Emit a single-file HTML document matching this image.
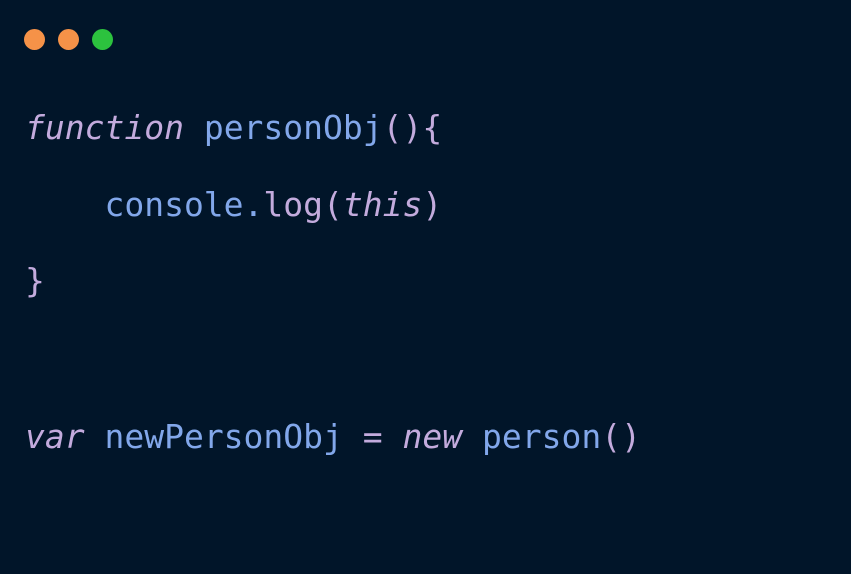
<!DOCTYPE html>
<html><head><style>
html,body{margin:0;padding:0;}
body{width:851px;height:574px;background:#011529;position:relative;overflow:hidden;font-family:"DejaVu Sans Mono","Liberation Mono",monospace;}
.d{position:absolute;top:29px;width:21px;height:21px;border-radius:50%;}
.l{position:absolute;left:25px;font-size:33px;line-height:40px;white-space:pre;color:#82a7ea;letter-spacing:0px;}
.k{color:#c3abdd;font-style:italic;}
.p{color:#c3abdd;}
</style></head><body>
<div class="d" style="left:24px;background:#f59248"></div>
<div class="d" style="left:58px;background:#f59248"></div>
<div class="d" style="left:92px;background:#2cc23e"></div>
<div class="l" style="top:108px"><span class="k">function</span> personObj<span class="p">(){</span></div>
<div class="l" style="top:185px">    console.<span class="p">log(</span><span class="k">this</span><span class="p">)</span></div>
<div class="l" style="top:261px"><span class="p">}</span></div>
<div class="l" style="top:417px"><span class="k">var</span> newPersonObj <span class="p">=</span> <span class="k">new</span> person<span class="p">()</span></div>
</body></html>
